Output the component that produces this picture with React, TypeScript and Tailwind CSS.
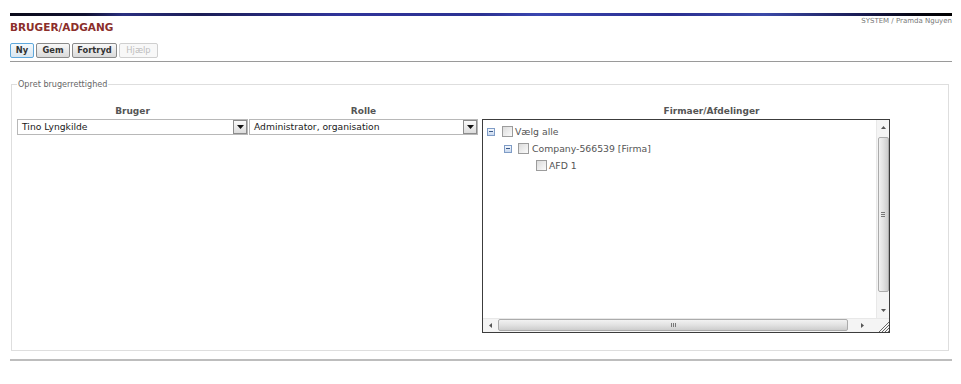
import React from "react";

const font = "font-['DejaVu_Sans',Verdana,sans-serif]";

function Select({ value, width }: { value: string; width: string }) {
  return (
    <div className={`${width} h-[16px] border border-[#b8b8b8] bg-white flex items-center justify-between`}>
      <span className="pl-[4px] text-[9.2px] leading-[14px] text-[#1a1a1a] whitespace-nowrap">{value}</span>
      <div className="w-[14px] h-[14px] border border-[#8c8c8c] bg-gradient-to-b from-[#fafafa] to-[#dcdcdc] flex items-center justify-center">
        <svg width="7" height="4" viewBox="0 0 7 4"><path d="M0 0H7L3.5 4Z" fill="#111" /></svg>
      </div>
    </div>
  );
}

function Expander() {
  return (
    <div className="w-[8px] h-[8px] border border-[#7f9cc6] bg-gradient-to-b from-[#f4f8fd] to-[#c9d8ee] flex items-center justify-center">
      <div className="w-[4px] h-[1px] bg-[#3a5a8a]" />
    </div>
  );
}

function Check() {
  return <div className="w-[11px] h-[11px] border border-[#9c9c9c] bg-gradient-to-br from-[#dcdcdc] to-[#fbfbfb]" />;
}

export default function App() {
  return (
    <div className={`w-[961px] h-[384px] bg-white overflow-hidden ${font}`}>
      <div className="pt-[13px] pl-[10px] pr-[9px]">
        <div className="h-[3px] bg-[linear-gradient(90deg,#0b0b1a_0%,#101030_8%,#2a2f80_12%,#1b1d55_20%,#30349a_35%,#2b3192_50%,#3a46b0_56%,#2a2e90_70%,#3b49a8_80%,#1a1c55_90%,#060612_96%,#000_100%)]" />
        <div className="flex justify-between items-start">
          <div className="mt-[4px] text-[10.5px] leading-[14px] font-bold text-[#8b2e2a]">BRUGER/ADGANG</div>
          <div className="mt-[1px] text-[7px] leading-[9px] text-[#777]">SYSTEM / Pramda Nguyen</div>
        </div>
        <div className="flex gap-[2px] mt-[9px]">
          <div className="w-[24px] h-[15px] border border-[#5fa8dc] rounded-[2px] bg-gradient-to-b from-[#f4f9fd] to-[#d9e6f0] text-[8.3px] font-bold text-[#333] leading-[13px] text-center">Ny</div>
          <div className="w-[34px] h-[15px] border border-[#8a8a8a] rounded-[2px] bg-gradient-to-b from-[#f8f8f8] to-[#dadada] text-[8.3px] font-bold text-[#333] leading-[13px] text-center">Gem</div>
          <div className="w-[45px] h-[15px] border border-[#8a8a8a] rounded-[2px] bg-gradient-to-b from-[#f8f8f8] to-[#dadada] text-[8.3px] font-bold text-[#333] leading-[13px] text-center">Fortryd</div>
          <div className="w-[39px] h-[15px] border border-[#cfcfcf] rounded-[2px] bg-[#f8f8f8] text-[8.3px] text-[#bdbdbd] leading-[13px] text-center">Hjælp</div>
        </div>
        <div className="mt-[3px] border-t border-[#9a9a9a]" />
        <div className="relative ml-[1px] mr-[3px] mt-[22px] border border-[#dedede] pl-[5px] pr-[6px] pt-[20px] pb-[17px]">
          <div className="absolute left-[5px] -top-[6px] bg-white px-[1px] text-[8.1px] leading-[11px] text-[#666]">Opret brugerrettighed</div>
          <div className="flex">
            <div className="w-[232px] flex flex-col">
              <div className="w-[231px] text-center text-[9px] leading-[13px] font-bold text-[#555] mb-[1px]">Bruger</div>
              <Select value="Tino Lyngkilde" width="w-[231px]" />
            </div>
            <div className="w-[232px] flex flex-col">
              <div className="w-[229px] text-center text-[9px] leading-[13px] font-bold text-[#555] mb-[1px]">Rolle</div>
              <Select value="Administrator, organisation" width="w-[229px]" />
            </div>
            <div className="flex-1 flex flex-col">
              <div className="text-center text-[9px] leading-[13px] font-bold text-[#555] mb-[1px]">Firmaer/Afdelinger</div>
              <div className="ml-[1px] w-[408px] h-[214px] border border-[#3c3c3c] flex flex-col bg-white">
                <div className="flex-1 flex">
                  <div className="flex-1 pt-[3px] text-[9.3px] text-[#555]">
                    <div className="h-[17px] flex items-center">
                      <div className="ml-[4px]"><Expander /></div>
                      <div className="ml-[7px]"><Check /></div>
                      <span className="ml-[2px]">Vælg alle</span>
                    </div>
                    <div className="h-[17px] flex items-center">
                      <div className="ml-[21px]"><Expander /></div>
                      <div className="ml-[6px]"><Check /></div>
                      <span className="ml-[3px]">Company-566539 [Firma]</span>
                    </div>
                    <div className="h-[17px] flex items-center">
                      <div className="ml-[53px]"><Check /></div>
                      <span className="ml-[2px]">AFD 1</span>
                    </div>
                  </div>
                  <div className="w-[13px] bg-[#f4f4f4] border-l border-[#e8e8e8] flex flex-col items-center">
                    <div className="h-[15px] w-full flex items-center justify-center">
                      <svg width="5" height="3" viewBox="0 0 5 3"><path d="M0 3H5L2.5 0Z" fill="#555" /></svg>
                    </div>
                    <div className="mt-[2px] w-[11px] h-[155px] rounded-[2px] border border-[#ababab] bg-gradient-to-r from-[#f2f2f2] via-[#e2e2e2] to-[#cdcdcd] flex items-center justify-center">
                      <div className="flex flex-col gap-[1px]">
                        <div className="w-[4px] h-[1px] bg-[#777]" />
                        <div className="w-[4px] h-[1px] bg-[#777]" />
                        <div className="w-[4px] h-[1px] bg-[#777]" />
                      </div>
                    </div>
                    <div className="flex-1" />
                    <div className="h-[15px] w-full flex items-center justify-center">
                      <svg width="5" height="3" viewBox="0 0 5 3"><path d="M0 0H5L2.5 3Z" fill="#555" /></svg>
                    </div>
                  </div>
                </div>
                <div className="h-[14px] flex bg-[#f4f4f4] border-t border-[#e8e8e8]">
                  <div className="w-[15px] flex items-center justify-center">
                    <svg width="3" height="5" viewBox="0 0 3 5"><path d="M3 0V5L0 2.5Z" fill="#555" /></svg>
                  </div>
                  <div className="w-[350px] h-[12px] rounded-[2px] border border-[#ababab] bg-gradient-to-b from-[#f2f2f2] via-[#e2e2e2] to-[#cdcdcd] flex items-center justify-center">
                    <div className="flex gap-[1px]">
                      <div className="w-[1px] h-[4px] bg-[#777]" />
                      <div className="w-[1px] h-[4px] bg-[#777]" />
                      <div className="w-[1px] h-[4px] bg-[#777]" />
                    </div>
                  </div>
                  <div className="flex-1 flex items-center justify-center">
                    <svg width="3" height="5" viewBox="0 0 3 5"><path d="M0 0V5L3 2.5Z" fill="#555" /></svg>
                  </div>
                  <div className="w-[13px] flex items-end justify-end">
                    <svg width="11" height="11" viewBox="0 0 11 11">
                      <path d="M11 1L1 11M11 4L4 11M11 7L7 11M11 10L10 11" stroke="#666" strokeWidth="1" />
                    </svg>
                  </div>
                </div>
              </div>
            </div>
          </div>
        </div>
        <div className="mt-[8px] border-t-2 border-[#bdbdbd]" />
      </div>
    </div>
  );
}
